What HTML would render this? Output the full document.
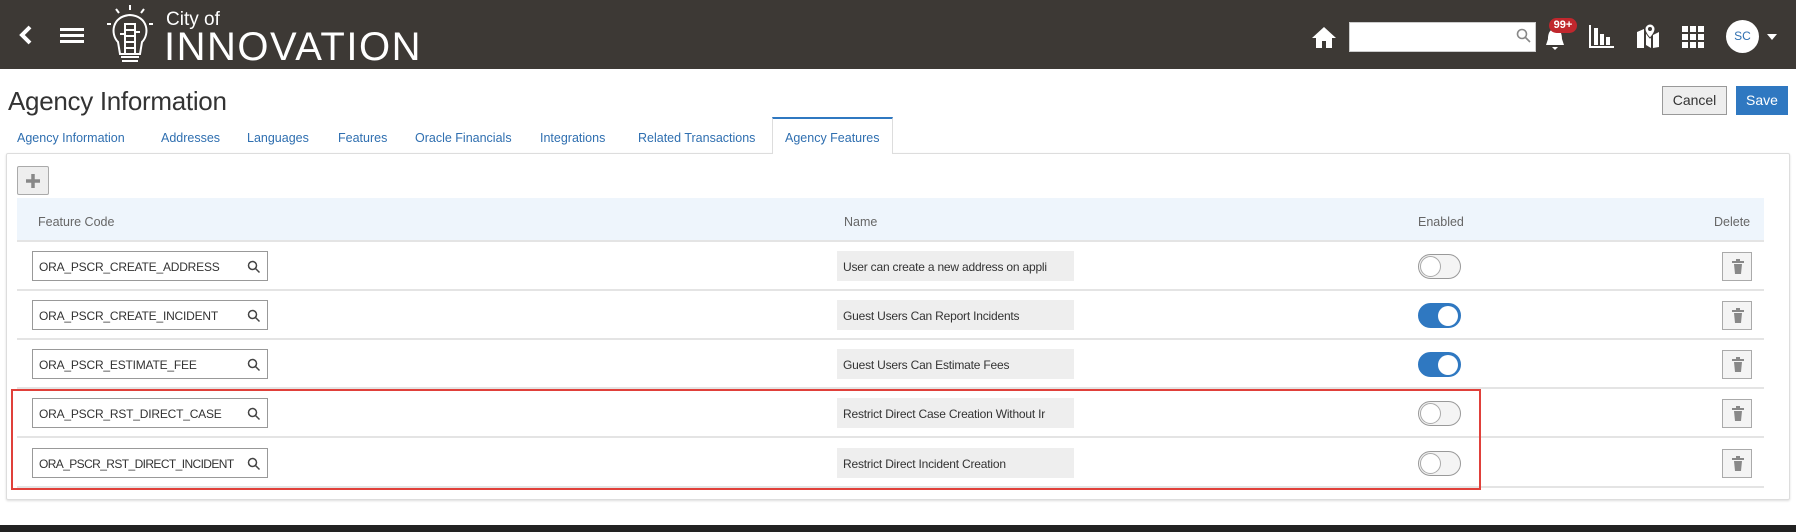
<!DOCTYPE html>
<html><head><meta charset="utf-8"><style>
*{box-sizing:border-box;margin:0;padding:0}
body{width:1796px;height:532px;overflow:hidden;background:#fff;font-family:"Liberation Sans",sans-serif;color:#333;position:relative}
.abs{position:absolute}
.hdr{left:0;top:0;width:1796px;height:69px;background:#3d3935}
.tab{position:absolute;top:131px;font-size:12.5px;color:#2f6fb0}
.row{position:absolute;left:17px;width:1747px;height:49px;border-bottom:2px solid #e4e4e4}
.inp{position:absolute;left:15px;top:9px;width:236px;height:30px;border:1px solid #999;background:#fff;font-size:12px;padding:8px 6px;color:#333;white-space:nowrap;overflow:hidden;letter-spacing:-0.2px}
.inp svg{position:absolute;right:6px;top:8px;background:#fff}
.nm{position:absolute;left:820px;top:9px;width:237px;height:30px;background:#eee;font-size:12px;padding:9px 6px;white-space:nowrap;overflow:hidden;letter-spacing:-0.2px}
.tg{position:absolute;left:1401px;top:12px;width:43px;height:25px;border-radius:13px;border:1px solid #999;background:#f4f4f4}
.tg i{position:absolute;left:1px;top:1px;width:21px;height:21px;border-radius:50%;background:#fff;border:1px solid #aaa}
.tg.on{background:#2f78c1;border-color:#2f78c1}
.tg.on i{left:19px;border:none;top:2px;width:20px;height:20px}
.del{position:absolute;left:1705px;top:10px;width:30px;height:29px;border:1px solid #aaa;background:#f4f4f4}
.del svg{position:absolute;left:9px;top:6px}
</style></head><body>
<div class="abs hdr"></div>
<svg class="abs" style="left:18px;top:25px" width="16" height="20"><path d="M12 2 L4 10 L12 18" stroke="#fff" stroke-width="4" fill="none"/></svg>
<svg class="abs" style="left:60px;top:28px" width="24" height="16"><rect y="0" width="24" height="3" fill="#fff"/><rect y="6" width="24" height="3" fill="#fff"/><rect y="12" width="24" height="3" fill="#fff"/></svg>
<svg class="abs" style="left:104px;top:4px" width="52" height="62" fill="none" stroke="#fff" stroke-width="2"><path d="M26 1v5M12 5l3 4M40 5l-3 4M3 20h4M45 20h4"/><path d="M14 38 C6 30 8 12 26 11 C44 12 46 30 38 38 L36 50 H16 Z"/><rect x="21" y="20" width="10" height="30"/><path d="M21 26h10M21 32h10M21 38h10M21 44h10M16 30h5M31 28h5"/><path d="M17 53h18M18 57h16"/></svg>
<div class="abs" style="left:166px;top:9px;color:#fff;font-size:19px">City of</div>
<div class="abs" style="left:164px;top:25px;color:#fff;font-size:40px;letter-spacing:1.5px">INNOVATION</div>
<svg class="abs" style="left:1311px;top:25px" width="26" height="24"><path d="M13 2 L1 13 h4 v10 h6 v-7 h4 v7 h6 v-10 h4 Z" fill="#fff"/></svg>
<div class="abs" style="left:1349px;top:22px;width:187px;height:30px;background:#fff;border:1px solid #ccc"></div>
<svg class="abs" style="left:1516px;top:28px" width="16" height="16" fill="none" stroke="#888" stroke-width="1.6"><circle cx="6" cy="6" r="4.5"/><path d="M9.5 9.5 L14 14"/></svg>
<svg class="abs" style="left:1544px;top:27px" width="22" height="24"><path d="M11 2 C5 2 4 8 4 12 L2 18 H20 L18 12 C18 8 17 2 11 2Z M8 20 h6 l-3 3z" fill="#fff"/></svg>
<div class="abs" style="left:1549px;top:18px;width:28px;height:15px;border-radius:8px;background:#c0272d;color:#fff;font-size:11px;font-weight:bold;text-align:center;line-height:15px">99+</div>
<svg class="abs" style="left:1589px;top:24px" width="26" height="24"><path d="M1 1v22h24" stroke="#fff" stroke-width="2" fill="none"/><rect x="5" y="4" width="4" height="17" fill="#fff"/><rect x="11" y="10" width="4" height="11" fill="#fff"/><rect x="17" y="13" width="4" height="8" fill="#fff"/></svg>
<svg class="abs" style="left:1636px;top:23px" width="24" height="26"><path d="M1 9 L8 6 V25 L1 25Z M10 8 L15 12 V25 L10 22Z M17 12 L23 9 V24 L17 25Z" fill="#fff"/><path d="M14 1 a5 5 0 0 1 5 5 c0 4 -5 9 -5 9 s-5 -5 -5 -9 a5 5 0 0 1 5 -5z" fill="#fff" stroke="#3d3935"/><circle cx="14" cy="6" r="2" fill="#3d3935"/></svg>
<svg class="abs" style="left:1682px;top:26px" width="22" height="22" fill="#fff"><rect x="0" y="0" width="6" height="6"/><rect x="8" y="0" width="6" height="6"/><rect x="16" y="0" width="6" height="6"/><rect x="0" y="8" width="6" height="6"/><rect x="8" y="8" width="6" height="6"/><rect x="16" y="8" width="6" height="6"/><rect x="0" y="16" width="6" height="6"/><rect x="8" y="16" width="6" height="6"/><rect x="16" y="16" width="6" height="6"/></svg>
<div class="abs" style="left:1726px;top:20px;width:33px;height:33px;border-radius:50%;background:#fff;color:#2f6fb0;font-size:12px;text-align:center;line-height:33px">SC</div>
<svg class="abs" style="left:1766px;top:33px" width="12" height="8"><path d="M1 1h10L6 7z" fill="#fff"/></svg>

<div class="abs" style="left:8px;top:86px;font-size:26px;color:#333;letter-spacing:-0.3px">Agency Information</div>
<div class="abs" style="left:1662px;top:86px;width:65px;height:29px;border:1px solid #999;background:#eee;font-size:14px;text-align:center;line-height:27px">Cancel</div>
<div class="abs" style="left:1736px;top:86px;width:52px;height:29px;background:#2f78c1;color:#fff;font-size:14px;text-align:center;line-height:29px">Save</div>

<div class="tab" style="left:17px">Agency Information</div>
<div class="tab" style="left:161px">Addresses</div>
<div class="tab" style="left:247px">Languages</div>
<div class="tab" style="left:338px">Features</div>
<div class="tab" style="left:415px">Oracle Financials</div>
<div class="tab" style="left:540px">Integrations</div>
<div class="tab" style="left:638px">Related Transactions</div>
<div class="abs" style="left:772px;top:117px;width:121px;height:37px;border:1px solid #ddd;border-top:2px solid #2f78c1;border-bottom:none;background:#fff;z-index:2"></div>
<div class="tab" style="left:785px;z-index:3">Agency Features</div>
<div class="abs" style="left:6px;top:153px;width:1784px;height:347px;border:1px solid #ddd;border-radius:2px;box-shadow:0 1px 2px #ddd"></div>
<div class="abs" style="left:17px;top:166px;width:32px;height:29px;border:1px solid #aaa;background:#eee;border-radius:2px"></div>
<svg class="abs" style="left:24px;top:172px" width="18" height="18"><path d="M9 2v14M2 9h14" stroke="#888" stroke-width="3.5"/></svg>

<div class="abs" style="left:17px;top:198px;width:1747px;height:44px;background:#eef5fc;border-bottom:2px solid #e4e4e4;font-size:12.5px;color:#666">
<span class="abs" style="left:21px;top:17px">Feature Code</span>
<span class="abs" style="left:827px;top:17px">Name</span>
<span class="abs" style="left:1401px;top:17px">Enabled</span>
<span class="abs" style="left:1697px;top:17px">Delete</span>
</div>

<div class="row" style="top:242px"><div class="inp">ORA_PSCR_CREATE_ADDRESS<svg width="14" height="14" fill="none" stroke="#444" stroke-width="1.5"><circle cx="5.5" cy="5.5" r="4"/><path d="M8.5 8.5l4 4"/></svg></div><div class="nm">User can create a new address on appli</div><div class="tg"><i></i></div><div class="del"><svg width="12" height="16"><path d="M0 3h12M4 1h4" stroke="#888" stroke-width="2"/><path d="M2 5h8l-1 10H3z" fill="#888"/></svg></div></div>
<div class="row" style="top:291px"><div class="inp">ORA_PSCR_CREATE_INCIDENT<svg width="14" height="14" fill="none" stroke="#444" stroke-width="1.5"><circle cx="5.5" cy="5.5" r="4"/><path d="M8.5 8.5l4 4"/></svg></div><div class="nm">Guest Users Can Report Incidents</div><div class="tg on"><i></i></div><div class="del"><svg width="12" height="16"><path d="M0 3h12M4 1h4" stroke="#888" stroke-width="2"/><path d="M2 5h8l-1 10H3z" fill="#888"/></svg></div></div>
<div class="row" style="top:340px"><div class="inp">ORA_PSCR_ESTIMATE_FEE<svg width="14" height="14" fill="none" stroke="#444" stroke-width="1.5"><circle cx="5.5" cy="5.5" r="4"/><path d="M8.5 8.5l4 4"/></svg></div><div class="nm">Guest Users Can Estimate Fees</div><div class="tg on"><i></i></div><div class="del"><svg width="12" height="16"><path d="M0 3h12M4 1h4" stroke="#888" stroke-width="2"/><path d="M2 5h8l-1 10H3z" fill="#888"/></svg></div></div>
<div class="row" style="top:389px"><div class="inp">ORA_PSCR_RST_DIRECT_CASE<svg width="14" height="14" fill="none" stroke="#444" stroke-width="1.5"><circle cx="5.5" cy="5.5" r="4"/><path d="M8.5 8.5l4 4"/></svg></div><div class="nm">Restrict Direct Case Creation Without Ir</div><div class="tg"><i></i></div><div class="del"><svg width="12" height="16"><path d="M0 3h12M4 1h4" stroke="#888" stroke-width="2"/><path d="M2 5h8l-1 10H3z" fill="#888"/></svg></div></div>
<div class="row" style="top:439px"><div class="inp" style="letter-spacing:-0.6px">ORA_PSCR_RST_DIRECT_INCIDENT<svg width="14" height="14" fill="none" stroke="#444" stroke-width="1.5"><circle cx="5.5" cy="5.5" r="4"/><path d="M8.5 8.5l4 4"/></svg></div><div class="nm">Restrict Direct Incident Creation</div><div class="tg"><i></i></div><div class="del"><svg width="12" height="16"><path d="M0 3h12M4 1h4" stroke="#888" stroke-width="2"/><path d="M2 5h8l-1 10H3z" fill="#888"/></svg></div></div>

<div class="abs" style="left:11px;top:389px;width:1470px;height:101px;border:2px solid #e0403a"></div>
<div class="abs" style="left:0;top:525px;width:1796px;height:7px;background:#222"></div>
</body></html>
